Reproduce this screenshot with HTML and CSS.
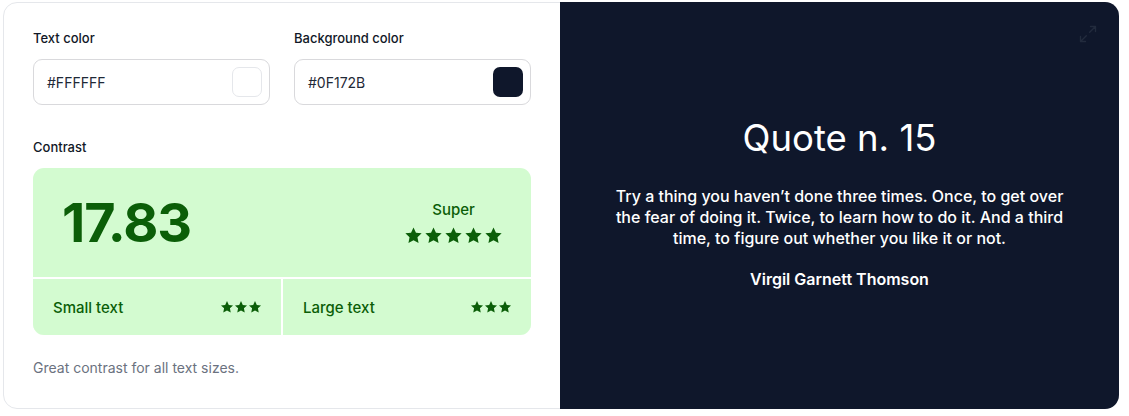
FILE: index.html
```html
<!DOCTYPE html>
<html>
<head>
<meta charset="utf-8">
<link rel="stylesheet" href="styles.css">
</head>
<body>
<div class="card">
  <div class="left">
    <div class="fields">
      <div class="field">
        <div class="label">Text color</div>
        <div class="input">
          <span class="value">#FFFFFF</span>
          <span class="swatch swatch-white"></span>
        </div>
      </div>
      <div class="field">
        <div class="label">Background color</div>
        <div class="input">
          <span class="value">#0F172B</span>
          <span class="swatch swatch-dark"></span>
        </div>
      </div>
    </div>
    <div class="label contrast-label">Contrast</div>
    <div class="contrast">
      <div class="contrast-top">
        <div class="ratio">17.83</div>
        <div class="rating">
          <div class="rating-text">Super</div>
          <div class="stars big">
            <svg viewBox="0 0 24 24"><path d="M12 1.8l3.1 6.6 7.2.9-5.3 5 1.4 7.1L12 17.9l-6.4 3.5L7 14.3l-5.3-5 7.2-.9z"/></svg>
            <svg viewBox="0 0 24 24"><path d="M12 1.8l3.1 6.6 7.2.9-5.3 5 1.4 7.1L12 17.9l-6.4 3.5L7 14.3l-5.3-5 7.2-.9z"/></svg>
            <svg viewBox="0 0 24 24"><path d="M12 1.8l3.1 6.6 7.2.9-5.3 5 1.4 7.1L12 17.9l-6.4 3.5L7 14.3l-5.3-5 7.2-.9z"/></svg>
            <svg viewBox="0 0 24 24"><path d="M12 1.8l3.1 6.6 7.2.9-5.3 5 1.4 7.1L12 17.9l-6.4 3.5L7 14.3l-5.3-5 7.2-.9z"/></svg>
            <svg viewBox="0 0 24 24"><path d="M12 1.8l3.1 6.6 7.2.9-5.3 5 1.4 7.1L12 17.9l-6.4 3.5L7 14.3l-5.3-5 7.2-.9z"/></svg>
          </div>
        </div>
      </div>
      <div class="contrast-bottom">
        <div class="cell">
          <span>Small text</span>
          <div class="stars small">
            <svg viewBox="0 0 24 24"><path d="M12 1.8l3.1 6.6 7.2.9-5.3 5 1.4 7.1L12 17.9l-6.4 3.5L7 14.3l-5.3-5 7.2-.9z"/></svg>
            <svg viewBox="0 0 24 24"><path d="M12 1.8l3.1 6.6 7.2.9-5.3 5 1.4 7.1L12 17.9l-6.4 3.5L7 14.3l-5.3-5 7.2-.9z"/></svg>
            <svg viewBox="0 0 24 24"><path d="M12 1.8l3.1 6.6 7.2.9-5.3 5 1.4 7.1L12 17.9l-6.4 3.5L7 14.3l-5.3-5 7.2-.9z"/></svg>
          </div>
        </div>
        <div class="cell">
          <span>Large text</span>
          <div class="stars small">
            <svg viewBox="0 0 24 24"><path d="M12 1.8l3.1 6.6 7.2.9-5.3 5 1.4 7.1L12 17.9l-6.4 3.5L7 14.3l-5.3-5 7.2-.9z"/></svg>
            <svg viewBox="0 0 24 24"><path d="M12 1.8l3.1 6.6 7.2.9-5.3 5 1.4 7.1L12 17.9l-6.4 3.5L7 14.3l-5.3-5 7.2-.9z"/></svg>
            <svg viewBox="0 0 24 24"><path d="M12 1.8l3.1 6.6 7.2.9-5.3 5 1.4 7.1L12 17.9l-6.4 3.5L7 14.3l-5.3-5 7.2-.9z"/></svg>
          </div>
        </div>
      </div>
    </div>
    <p class="note">Great contrast for all text sizes.</p>
  </div>
  <div class="right">
    <svg class="expand" viewBox="0 0 24 24" fill="none" stroke="currentColor" stroke-width="1.6" stroke-linecap="round" stroke-linejoin="round"><path d="M15 3h6v6M9 21H3v-6M21 3l-7 7M3 21l7-7"/></svg>
    <div class="quote">
      <h1 class="quote-title">Quote n. 15</h1>
      <p class="quote-text">Try a thing you haven’t done three times. Once, to get over the fear of doing it. Twice, to learn how to do it. And a third time, to figure out whether you like it or not.</p>
      <p class="quote-author">Virgil Garnett Thomson</p>
    </div>
  </div>
</div>
</body>
</html>
```

FILE: styles.css
```css
* { box-sizing: border-box; }
html, body { margin: 0; background: #fff; }
body {
  padding: 2px 10px 0 3px;
  font-family: Inter, "Noto Sans", sans-serif;
  color: #111827;
}
.card {
  display: flex;
  width: 1116px;
  height: 407px;
  border: 1px solid #e5e7eb;
  border-radius: 14px;
}
.left {
  width: 556px;
  flex: none;
  padding: 25px 29px 0 29px;
}
.fields {
  display: grid;
  grid-template-columns: 237px 237px;
  column-gap: 24px;
}
.label {
  font-size: 13px;
  font-weight: 500;
  line-height: 20px;
  color: #111827;
}
.input {
  margin-top: 11px;
  height: 46px;
  border: 1px solid #d9d9dc;
  border-radius: 9px;
  display: flex;
  align-items: center;
  justify-content: space-between;
  padding: 0 7px 0 13px;
}
.value {
  font-size: 14px;
  color: #1f2937;
}
.swatch {
  width: 30px;
  height: 30px;
  border-radius: 7px;
}
.swatch-white { background: #fff; border: 1px solid #e5e7eb; }
.swatch-dark { background: #0f172b; }
.contrast-label { margin-top: 32px; }
.contrast {
  margin-top: 11px;
  background: #d3fbd0;
  border-radius: 11px;
  overflow: hidden;
  color: #0b5e08;
}
.contrast-top {
  height: 111px;
  display: flex;
  align-items: center;
  justify-content: space-between;
  padding: 0 29px 0 29px;
  border-bottom: 2px solid #fff;
}
.ratio {
  font-size: 54px;
  font-weight: 700;
  letter-spacing: -0.02em;
  line-height: 1;
}
.rating {
  display: flex;
  flex-direction: column;
  align-items: center;
  margin-right: -1px;
}
.rating-text {
  font-size: 15px;
  font-weight: 500;
  line-height: 20px;
}
.stars { display: flex; }
.stars svg { fill: #0b5e08; }
.stars.big { margin-top: 6px; gap: 1px; }
.stars.big svg { width: 19px; height: 19px; }
.stars.small { gap: 0; }
.stars.small svg { width: 14px; height: 14px; }
.contrast-bottom {
  display: grid;
  grid-template-columns: 1fr 1fr;
  column-gap: 2px;
  background: #fff;
}
.cell {
  height: 56px;
  background: #d3fbd0;
  display: flex;
  align-items: center;
  justify-content: space-between;
  padding: 0 19px 0 20px;
  font-size: 15px;
  font-weight: 500;
}
.note {
  margin: 23px 0 0;
  font-size: 14px;
  color: #6b7280;
  line-height: 20px;
}
.right {
  flex: 1;
  margin: -1px -1px -1px 0;
  padding-bottom: 4px;
  background: #0f172b;
  border-radius: 0 14px 14px 0;
  position: relative;
  display: flex;
  align-items: center;
  justify-content: center;
  color: #fff;
}
.expand {
  position: absolute;
  top: 22px;
  right: 21px;
  width: 20px;
  height: 20px;
  color: #222b3d;
}
.quote {
  width: 470px;
  text-align: center;
}
.quote-title {
  margin: 0;
  font-size: 36.5px;
  font-weight: 400;
  line-height: 42px;
}
.quote-text {
  margin: 27px 0 0;
  font-size: 16px;
  font-weight: 500;
  line-height: 21px;
}
.quote-author {
  margin: 20px 0 0;
  font-size: 16px;
  font-weight: 600;
  line-height: 21px;
}
```
